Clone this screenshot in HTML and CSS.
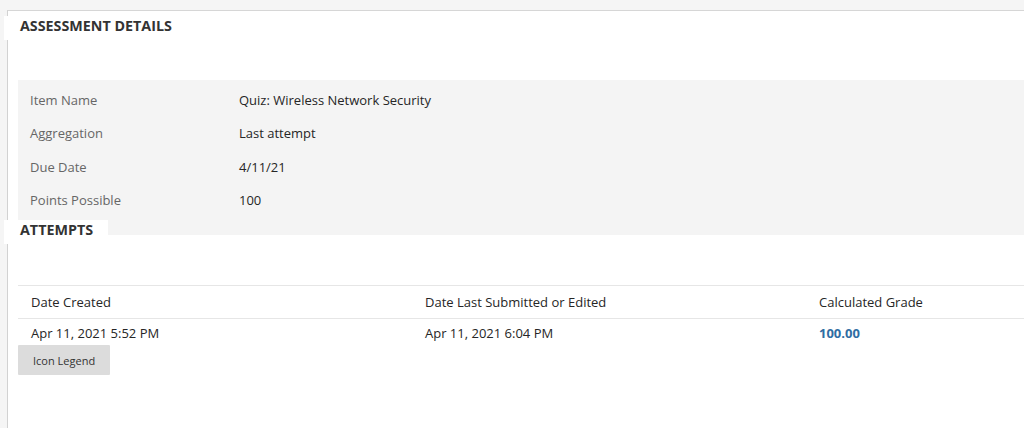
FILE: index.html
```html
<!DOCTYPE html>
<html lang="en">
<head>
<meta charset="utf-8">
<title>Assessment Details</title>
<link rel="stylesheet" href="styles.css">
</head>
<body>
<div class="panel">
  <h2 class="tab tab-first">ASSESSMENT DETAILS</h2>
  <div class="details">
    <div class="row"><div class="label">Item Name</div><div class="value">Quiz: Wireless Network Security</div></div>
    <div class="row"><div class="label">Aggregation</div><div class="value">Last attempt</div></div>
    <div class="row"><div class="label">Due Date</div><div class="value">4/11/21</div></div>
    <div class="row"><div class="label">Points Possible</div><div class="value">100</div></div>
  </div>
  <h2 class="tab tab-attempts">ATTEMPTS</h2>
  <div class="attempts">
    <div class="trow thead">
      <div class="cell">Date Created</div>
      <div class="cell">Date Last Submitted or Edited</div>
      <div class="cell">Calculated Grade</div>
    </div>
    <div class="trow tbody">
      <div class="cell">Apr 11, 2021 5:52 PM</div>
      <div class="cell">Apr 11, 2021 6:04 PM</div>
      <div class="cell grade">100.00</div>
    </div>
  </div>
  <button class="legend-btn" type="button">Icon Legend</button>
</div>
</body>
</html>
```

FILE: styles.css
```css
html, body {
  margin: 0;
  padding: 0;
}
body {
  background: #f5f5f5;
  font-family: "Open Sans", "Liberation Sans", Arial, sans-serif;
  font-size: 13px;
  color: #262626;
  overflow: hidden;
}
.panel {
  margin: 10px 0 0 7px;
  background: #ffffff;
  border-top: 1px solid #d6d6d6;
  border-left: 1px solid #d2d2d2;
  min-height: 420px;
}
.tab {
  display: block;
  width: fit-content;
  position: relative;
  margin: 0 0 0 -4px;
  padding: 0 15px 5px 16px;
  background: #ffffff;
  font-size: 14.3px;
  font-weight: 700;
  line-height: 19px;
  color: #333333;
}
.tab-first {
  margin-top: 5px;
}
.tab-attempts {
  margin-top: -15px;
}
.details {
  margin: 40px 0 0 10px;
  padding: 4px 0 18px 12px;
  background: #f4f4f4;
}
.row {
  display: flex;
  padding: 7px 0;
  line-height: 19.33px;
}
.label {
  width: 209px;
  color: #666666;
}
.value {
  color: #262626;
}
.attempts {
  margin: 41px 0 0 10px;
  border-top: 1px solid #e6e6e6;
}
.trow {
  display: grid;
  grid-template-columns: 394px 394px 1fr;
  line-height: 18px;
}
.thead {
  border-bottom: 1px solid #e6e6e6;
}
.thead .cell {
  padding: 7px 13px 7px 13px;
}
.tbody .cell {
  padding: 5px 13px 3px 13px;
}
.cell {
  color: #262626;
  white-space: nowrap;
}
.grade {
  color: #2f6da3;
  font-weight: 700;
}
.legend-btn {
  display: block;
  margin: 0 0 0 10px;
  height: 30px;
  padding: 0 15px;
  border: none;
  border-radius: 1px;
  background: #dcdcdc;
  font-family: "Open Sans", "Liberation Sans", Arial, sans-serif;
  font-size: 11px;
  color: #333333;
}
```
